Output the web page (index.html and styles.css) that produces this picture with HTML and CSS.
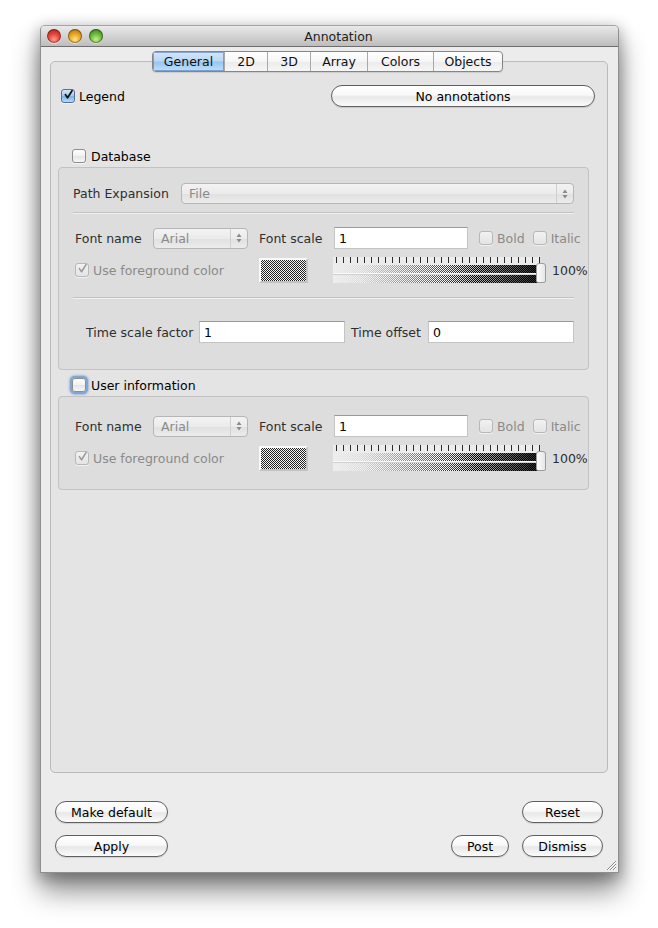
FILE: index.html
```html
<!DOCTYPE html>
<html>
<head>
<meta charset="utf-8">
<title>Annotation</title>
<link rel="stylesheet" href="styles.css">
</head>
<body>
<div class="stage">
  <div class="window">
    <div class="titlebar">
      <div class="lights">
        <span class="light red"></span>
        <span class="light yellow"></span>
        <span class="light green"></span>
      </div>
      <div class="title">Annotation</div>
    </div>

    <div class="tabs">
      <div class="tab sel t-general">General</div>
      <div class="tab t-2d">2D</div>
      <div class="tab t-3d">3D</div>
      <div class="tab t-array">Array</div>
      <div class="tab t-colors">Colors</div>
      <div class="tab t-objects">Objects</div>
    </div>

    <div class="pane">
      <div class="legend-row">
        <div class="check-label">
          <span class="cb cb-blue"><svg viewBox="0 0 14 14" width="14" height="14"><path d="M3 6.5 L5.8 10.5 L11.5 1.5" fill="none" stroke="#111" stroke-width="2.2" stroke-linecap="round" stroke-linejoin="round"/></svg></span>
          <span>Legend</span>
        </div>
        <div class="btn btn-wide">No annotations</div>
      </div>

      <div class="group-head head-db">
        <span class="cb"></span><span>Database</span>
      </div>
      <div class="group group-db">
        <div class="path-row">
          <span class="lbl lbl-path">Path Expansion</span>
          <div class="combo combo-path"><span class="combo-text">File</span><span class="stepper"><svg viewBox="0 0 8 12" width="8" height="12"><path d="M4 1.5 L6.5 5 L1.5 5 Z M4 10.5 L6.5 7 L1.5 7 Z" fill="#8a8a8a"/></svg></span></div>
        </div>
        <div class="sep sep-a"></div>
        <div class="font-row">
          <span class="lbl lbl-font">Font name</span>
          <div class="combo combo-font"><span class="combo-text">Arial</span><span class="stepper"><svg viewBox="0 0 8 12" width="8" height="12"><path d="M4 1.5 L6.5 5 L1.5 5 Z M4 10.5 L6.5 7 L1.5 7 Z" fill="#8a8a8a"/></svg></span></div>
          <span class="lbl lbl-scale">Font scale</span>
          <div class="input input-scale">1</div>
          <span class="cb cb-dis cb-bold"></span><span class="dis-text">Bold</span>
          <span class="cb cb-dis cb-italic"></span><span class="dis-text">Italic</span>
        </div>
        <div class="fg-row">
          <div class="check-label fg-label">
            <span class="cb cb-dis"><svg viewBox="0 0 14 14" width="14" height="14"><path d="M3 6.5 L5.8 10.5 L11.5 1.5" fill="none" stroke="#9a9a9a" stroke-width="2" stroke-linecap="round" stroke-linejoin="round"/></svg></span>
            <span class="dis-text">Use foreground color</span>
          </div>
          <div class="swatch"></div>
          <div class="slider">
            <div class="ticks"></div>
            <div class="bar"></div>
            <div class="track"></div>
            <div class="bar"></div>
            <div class="thumb"></div>
          </div>
          <span class="pct">100%</span>
        </div>
        <div class="sep sep-b"></div>
        <div class="time-row">
          <span class="lbl lbl-tsf">Time scale factor</span>
          <div class="input input-time">1</div>
          <span class="lbl lbl-toff">Time offset</span>
          <div class="input input-time">0</div>
        </div>
      </div>

      <div class="group-head head-user">
        <span class="cb cb-focus"></span><span>User information</span>
      </div>
      <div class="group group-user">
        <div class="font-row font-row-user">
          <span class="lbl lbl-font">Font name</span>
          <div class="combo combo-font"><span class="combo-text">Arial</span><span class="stepper"><svg viewBox="0 0 8 12" width="8" height="12"><path d="M4 1.5 L6.5 5 L1.5 5 Z M4 10.5 L6.5 7 L1.5 7 Z" fill="#8a8a8a"/></svg></span></div>
          <span class="lbl lbl-scale">Font scale</span>
          <div class="input input-scale">1</div>
          <span class="cb cb-dis cb-bold"></span><span class="dis-text">Bold</span>
          <span class="cb cb-dis cb-italic"></span><span class="dis-text">Italic</span>
        </div>
        <div class="fg-row">
          <div class="check-label fg-label">
            <span class="cb cb-dis"><svg viewBox="0 0 14 14" width="14" height="14"><path d="M3 6.5 L5.8 10.5 L11.5 1.5" fill="none" stroke="#9a9a9a" stroke-width="2" stroke-linecap="round" stroke-linejoin="round"/></svg></span>
            <span class="dis-text">Use foreground color</span>
          </div>
          <div class="swatch"></div>
          <div class="slider">
            <div class="ticks"></div>
            <div class="bar"></div>
            <div class="track"></div>
            <div class="bar"></div>
            <div class="thumb"></div>
          </div>
          <span class="pct">100%</span>
        </div>
      </div>
    </div>

    <div class="footer">
      <div class="foot-row">
        <div class="btn btn-left">Make default</div>
        <div class="btn btn-reset">Reset</div>
      </div>
      <div class="foot-row">
        <div class="btn btn-left">Apply</div>
        <div class="right-group">
          <div class="btn btn-post">Post</div>
          <div class="btn btn-reset">Dismiss</div>
        </div>
      </div>
    </div>

    <svg class="grip" viewBox="0 0 11 11" width="11" height="11">
      <path d="M1 10 L10 1 M4 10 L10 4 M7 10 L10 7" stroke="#8a8a8a" stroke-width="1"/>
      <path d="M2 10 L10 2 M5 10 L10 5 M8 10 L10 8" stroke="#fafafa" stroke-width="1"/>
    </svg>
  </div>
</div>
</body>
</html>
```

FILE: styles.css
```css
* { box-sizing: border-box; }
html, body { margin: 0; padding: 0; background: #ffffff; }
body {
  font-family: "DejaVu Sans", "Liberation Sans", sans-serif;
  font-size: 12.5px;
  color: #000;
}
.stage { padding: 25px 0 55px 40px; }

.window {
  position: relative;
  width: 579px;
  height: 848px;
  background: #ececec;
  border: 1px solid #8f8f8f;
  border-top-color: #a5a5a5;
  border-radius: 5px 5px 0 0;
  box-shadow: 0 18px 28px 0 rgba(0,0,0,0.45), 0 4px 14px 2px rgba(0,0,0,0.25);
  display: flex;
  flex-direction: column;
}

.titlebar {
  flex: none;
  height: 21px;
  display: grid;
  grid-template-columns: 70px 1fr 52px;
  align-items: center;
  background: linear-gradient(#e9e9e9, #d3d3d3 50%, #bdbdbd);
  border-bottom: 1px solid #6e6e6e;
  border-radius: 4px 4px 0 0;
}
.lights { display: flex; gap: 7px; padding-left: 6px; }
.light {
  width: 14px; height: 14px; border-radius: 50%;
  box-shadow: inset 0 0 0 1px rgba(0,0,0,0.35), 0 1px 0 rgba(255,255,255,0.5);
}
.red { background: radial-gradient(circle at 50% 75%, #ff9a8c 0, #e2453b 45%, #b52a20 80%), #d33; }
.yellow { background: radial-gradient(circle at 50% 75%, #ffe28a 0, #e8a624 45%, #b8771a 80%); }
.green { background: radial-gradient(circle at 50% 75%, #c6f08c 0, #6cba3d 45%, #3f8a23 80%); }
.title { grid-column: 2; text-align: center; color: #1e1e1e; font-size: 12.5px; }

.tabs {
  position: relative;
  z-index: 2;
  flex: none;
  display: flex;
  margin: 4px 0 0 111px;
  width: 351px;
  height: 21px;
  border: 1px solid #858585;
  border-radius: 4px;
  overflow: hidden;
  background: linear-gradient(#ffffff, #f6f6f6 50%, #ebebeb 51%, #f6f6f6);
  box-shadow: 0 1px 1px rgba(0,0,0,0.1);
}
.tab {
  display: flex; align-items: center; justify-content: center;
  height: 100%;
  border-left: 1px solid #a9a9a9;
  color: #111;
}
.tab.sel {
  border-left: none;
  background: linear-gradient(#d4e6fa, #b9d7f5 48%, #97c4f0 52%, #bfe0fb);
  box-shadow: inset 0 0 0 1px rgba(60,100,165,0.5);
}
.t-general { width: 71px; }
.t-2d { width: 43px; }
.t-3d { width: 43px; }
.t-array { width: 57px; }
.t-colors { width: 66px; }
.t-objects { width: 69px; }

.pane {
  flex: none;
  margin: -11px 10px 0 9px;
  height: 712px;
  border: 1px solid #bababa;
  border-radius: 5px;
  background: #e4e4e4;
  padding: 23px 12px 0 10px;
  display: flex;
  flex-direction: column;
}

.legend-row {
  height: 22px;
  display: flex;
  align-items: center;
  justify-content: space-between;
}
.check-label { display: flex; align-items: center; gap: 4px; }

.cb {
  flex: none;
  width: 14px; height: 14px;
  border: 1px solid #8d8d8d;
  border-radius: 3px;
  background: linear-gradient(#fefefe, #f2f2f2 50%, #e4e4e4 51%, #f7f7f7);
  box-shadow: 0 1px 0 rgba(255,255,255,0.6);
  display: inline-flex; align-items: center; justify-content: center;
  overflow: visible;
}
.cb svg { display: block; margin-top: -3px; margin-left: 1px; }
.cb-blue {
  border-color: #51709a;
  background: linear-gradient(#d6e7fb, #9fc7ef 50%, #7cb2ea 51%, #b6d9fb);
}
.cb-dis {
  border-color: #b8b8b8;
  background: linear-gradient(#f2f2f2, #e4e4e4);
}
.cb-focus { box-shadow: 0 0 0 2px #7fa6d6, 0 0 2px 3px rgba(110,150,210,0.55); }

.btn {
  height: 22px;
  border: 1px solid #5f5f5f;
  border-radius: 11px;
  background: linear-gradient(#ffffff, #f8f8f8 45%, #e8e8e8 55%, #fbfbfb);
  box-shadow: 0 1px 1px rgba(0,0,0,0.12);
  display: flex; align-items: center; justify-content: center;
  color: #000;
}
.btn-wide { width: 264px; }

.group-head {
  height: 14px;
  display: flex;
  align-items: center;
  gap: 5px;
  padding-left: 11px;
}
.head-db { margin-top: 42px; }
.head-user { margin-top: 8px; }

.group {
  margin: 4px 6px 0 -3px;
  border: 1px solid #c2c2c2;
  border-radius: 4px;
  background: #dddddd;
  flex: none;
}
.group-db { height: 203px; }
.group-user { height: 94px; }

.lbl { color: #2e2e2e; }
.dis-text { color: #8a8a8a; }

.path-row {
  margin-top: 15px;
  height: 21px;
  padding: 0 14px;
  display: flex;
  align-items: center;
}
.lbl-path { width: 108px; flex: none; }

.combo {
  height: 21px;
  border: 1px solid #b6b6b6;
  border-radius: 4px;
  background: linear-gradient(#f3f3f3, #ebebeb 50%, #e0e0e0 51%, #ececec);
  display: flex;
  align-items: center;
  justify-content: space-between;
}
.combo-path { flex: 1; }
.combo-font { width: 95px; flex: none; }
.combo-text { color: #8a8a8a; padding-left: 7px; }
.stepper {
  width: 17px; height: 100%;
  border-left: 1px solid #cfcfcf;
  display: flex; align-items: center; justify-content: center;
}
.stepper svg { display: block; }

.sep {
  height: 2px;
  margin: 0 14px;
  border-top: 1px solid #c2c2c2;
  border-bottom: 1px solid #f1f1f1;
}
.sep-a { margin-top: 8px; }
.sep-b { margin-top: 14px; }

.font-row {
  margin-top: 13px;
  height: 22px;
  padding-left: 16px;
  display: flex;
  align-items: center;
}
.font-row-user { margin-top: 18px; }
.lbl-font { width: 78px; flex: none; }
.lbl-scale { width: 75px; flex: none; margin-left: 11px; }

.input {
  height: 22px;
  background: #ffffff;
  border: 1px solid #c4c4c4;
  border-top-color: #9a9a9a;
  padding-left: 4px;
  display: flex; align-items: center;
  color: #000;
  flex: none;
}
.input-scale { width: 134px; }
.cb-bold { margin-left: 11px; margin-right: 4px; }
.cb-italic { margin-left: 8px; margin-right: 4px; }

.fg-row {
  margin-top: 8px;
  height: 26px;
  padding-left: 16px;
  display: flex;
  align-items: center;
}
.fg-label { width: 184px; flex: none; gap: 4px; }
.swatch {
  flex: none;
  width: 49px; height: 25px;
  border: 2px solid #fafafa;
  border-right-color: #c2c2c2;
  border-bottom-color: #c2c2c2;
  background: repeating-conic-gradient(#222 0 25%, #f4f4f4 0 50%) 0 0 / 2px 2px;
}
.slider {
  position: relative;
  flex: none;
  width: 213px; height: 26px;
  margin-left: 25px;
  display: flex;
  flex-direction: column;
}
.ticks {
  height: 8px;
  background:
    repeating-linear-gradient(to right, transparent 0 3px, #2b2b2b 3px 4px, transparent 4px 7px) 0 0 / 100% 6px no-repeat,
    #ececec;
  margin-right: 6px;
}
.bar {
  height: 8px;
  margin-right: 8px;
  background:
    linear-gradient(to right, rgba(238,238,238,1) 0%, rgba(238,238,238,0.9) 15%, rgba(238,238,238,0.45) 45%, rgba(238,238,238,0) 70%),
    linear-gradient(to right, rgba(0,0,0,0) 55%, rgba(0,0,0,0.55) 85%, rgba(0,0,0,0.85) 100%),
    repeating-conic-gradient(#000 0 25%, #fff 0 50%) 0 0 / 2px 2px;
}
.track {
  height: 2px;
  margin-right: 8px;
  background: #fafafa;
  border-bottom: 1px solid #cfcfcf;
}
.thumb {
  position: absolute;
  right: 0;
  top: 6px;
  width: 10px;
  height: 20px;
  background: linear-gradient(to right, #fdfdfd, #e6e6e6);
  border: 1px solid #9c9c9c;
  border-radius: 3px 3px 2px 2px;
}
.pct { margin-left: 6px; color: #2e2e2e; }

.time-row {
  margin-top: 22px;
  height: 22px;
  padding-left: 27px;
  display: flex;
  align-items: center;
}
.lbl-tsf { width: 113px; flex: none; }
.lbl-toff { width: 77px; flex: none; margin-left: 6px; }
.input-time { width: 146px; }

.footer {
  flex: none;
  margin-top: 28px;
  padding: 0 15px 0 14px;
  display: flex;
  flex-direction: column;
  gap: 12px;
}
.foot-row { display: flex; justify-content: space-between; align-items: center; }
.btn-left { width: 113px; }
.btn-reset { width: 81px; }
.btn-post { width: 58px; }
.right-group { display: flex; gap: 13px; }

.grip { position: absolute; right: 1px; bottom: 1px; }
```
